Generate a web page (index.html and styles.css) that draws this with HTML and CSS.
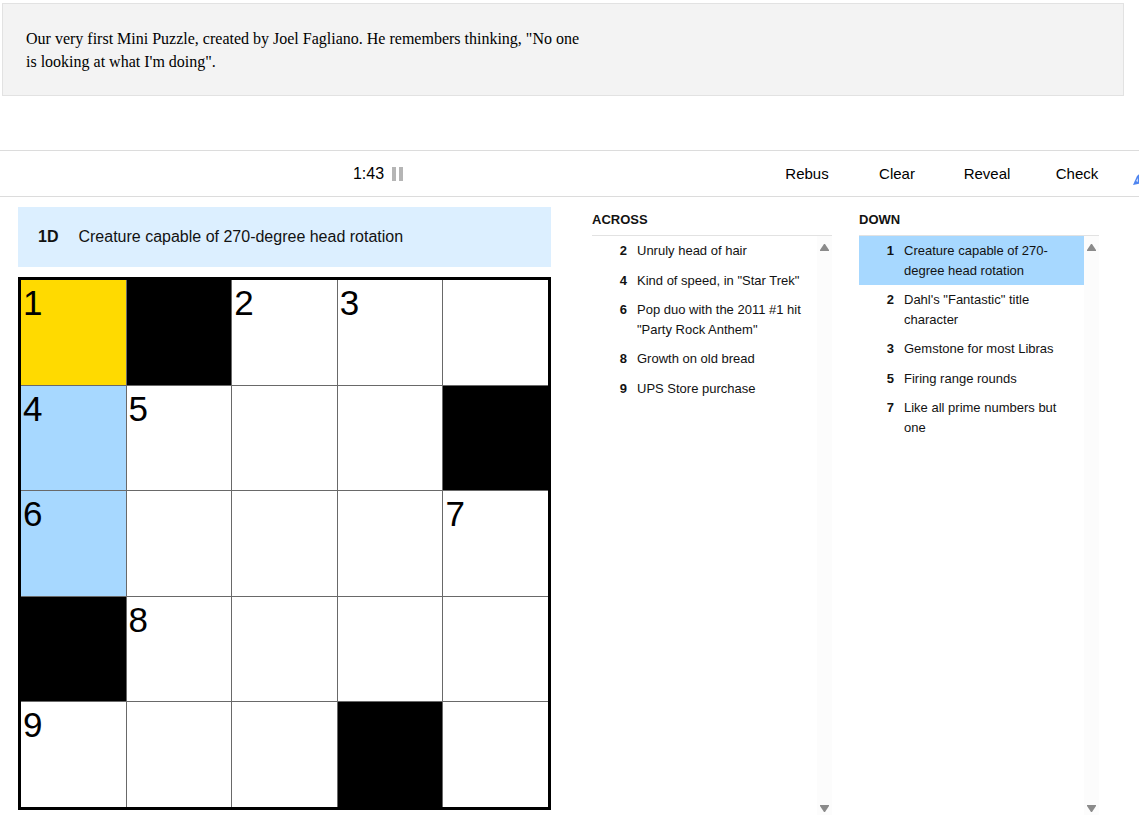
FILE: index.html
```html
<!DOCTYPE html>
<html lang="en">

<head>
  <meta charset="UTF-8">
  <title>Mini Crossword</title>
  <link rel="stylesheet" href="styles.css">
</head>

<body>
  <div class="note">
    <p>Our very first Mini Puzzle, created by Joel Fagliano. He remembers thinking, "No one is looking at what I'm doing".</p>
  </div>

  <div class="toolbar">
    <div class="timer">
      <span>1:43</span>
      <button class="pause" aria-label="Pause">
        <svg width="12" height="14" viewBox="0 0 12 14"><path d="M0 0h4v14H0zM7 0h4v14H7z" fill="#b5b5b5"/></svg>
      </button>
    </div>
    <div class="tools">
      <button>Rebus</button>
      <button>Clear</button>
      <button>Reveal</button>
      <button>Check</button>
    </div>
    <button class="pencil" aria-label="Pencil">
      <svg width="24" height="24" viewBox="0 0 24 24"><path d="M0 14L4 5L14 -4L19 2L9 12Z" fill="#4f85f0"/><path d="M3 10L5 7L5 11Z" fill="#c9dafa"/></svg>
    </button>
  </div>

  <main class="game">
    <section class="puzzle">
      <div class="current-clue">
        <span class="current-num">1D</span>
        <span>Creature capable of 270-degree head rotation</span>
      </div>
      <div class="board">
        <label class="cell selected"><span>1</span><input maxlength="1"></label>
        <div class="cell block"></div>
        <label class="cell"><span>2</span><input maxlength="1"></label>
        <label class="cell"><span>3</span><input maxlength="1"></label>
        <label class="cell"><input maxlength="1" aria-label="Row 1, column 5"></label>

        <label class="cell highlighted"><span>4</span><input maxlength="1"></label>
        <label class="cell"><span>5</span><input maxlength="1"></label>
        <label class="cell"><input maxlength="1" aria-label="Row 2, column 3"></label>
        <label class="cell"><input maxlength="1" aria-label="Row 2, column 4"></label>
        <div class="cell block"></div>

        <label class="cell highlighted"><span>6</span><input maxlength="1"></label>
        <label class="cell"><input maxlength="1" aria-label="Row 3, column 2"></label>
        <label class="cell"><input maxlength="1" aria-label="Row 3, column 3"></label>
        <label class="cell"><input maxlength="1" aria-label="Row 3, column 4"></label>
        <label class="cell"><span>7</span><input maxlength="1"></label>

        <div class="cell block"></div>
        <label class="cell"><span>8</span><input maxlength="1"></label>
        <label class="cell"><input maxlength="1" aria-label="Row 4, column 3"></label>
        <label class="cell"><input maxlength="1" aria-label="Row 4, column 4"></label>
        <label class="cell"><input maxlength="1" aria-label="Row 4, column 5"></label>

        <label class="cell"><span>9</span><input maxlength="1"></label>
        <label class="cell"><input maxlength="1" aria-label="Row 5, column 2"></label>
        <label class="cell"><input maxlength="1" aria-label="Row 5, column 3"></label>
        <div class="cell block"></div>
        <label class="cell"><input maxlength="1" aria-label="Row 5, column 5"></label>
      </div>
    </section>

    <div class="clues">
      <section class="clue-list">
        <h3>Across</h3>
        <div class="scroll-area">
          <ol>
            <li><b>2</b><span>Unruly head of hair</span></li>
            <li><b>4</b><span>Kind of speed, in "Star Trek"</span></li>
            <li><b>6</b><span>Pop duo with the 2011 #1 hit "Party Rock Anthem"</span></li>
            <li><b>8</b><span>Growth on old bread</span></li>
            <li><b>9</b><span>UPS Store purchase</span></li>
          </ol>
          <div class="rail">
            <button aria-label="Scroll up"><svg width="9" height="7" viewBox="0 0 9 7"><path d="M4 0h1l4 6v1H0V6z" fill="#8b8b8b"/></svg></button>
            <button aria-label="Scroll down"><svg width="9" height="7" viewBox="0 0 9 7"><path d="M4 7h1l4-6V0H0v1z" fill="#8b8b8b"/></svg></button>
          </div>
        </div>
      </section>

      <section class="clue-list">
        <h3>Down</h3>
        <div class="scroll-area">
          <ol>
            <li class="active"><b>1</b><span>Creature capable of 270-degree head rotation</span></li>
            <li><b>2</b><span>Dahl's "Fantastic" title character</span></li>
            <li><b>3</b><span>Gemstone for most Libras</span></li>
            <li><b>5</b><span>Firing range rounds</span></li>
            <li><b>7</b><span>Like all prime numbers but one</span></li>
          </ol>
          <div class="rail">
            <button aria-label="Scroll up"><svg width="9" height="7" viewBox="0 0 9 7"><path d="M4 0h1l4 6v1H0V6z" fill="#8b8b8b"/></svg></button>
            <button aria-label="Scroll down"><svg width="9" height="7" viewBox="0 0 9 7"><path d="M4 7h1l4-6V0H0v1z" fill="#8b8b8b"/></svg></button>
          </div>
        </div>
      </section>
    </div>
  </main>
</body>

</html>
```
FILE: styles.css
```css
* {
  box-sizing: border-box;
}

body {
  margin: 0;
  padding-top: 3px;
  background: #fff;
  color: #121212;
  font-family: "Liberation Sans", Arial, sans-serif;
}

button {
  padding: 0;
  border: 0;
  background: none;
  color: #000;
  font: inherit;
  cursor: pointer;
}

svg {
  display: block;
}

.note {
  margin: 0 15px 54px 2px;
  padding: 23px 23px 22px;
  border: 1px solid #e2e2e2;
  background: #f3f3f3;
  color: #000;
  font-family: "Liberation Serif", "Times New Roman", serif;
  font-size: 16px;
  line-height: 23px;
}

.note p {
  max-width: 560px;
  margin: 0;
}

.toolbar {
  display: flex;
  align-items: center;
  height: 47px;
  border-top: 1px solid #dcdcdc;
  border-bottom: 1px solid #dcdcdc;
  color: #000;
  font-size: 15px;
  overflow: hidden;
}

.timer {
  display: flex;
  flex: 1;
  justify-content: center;
  align-items: center;
  gap: 8px;
  padding-right: 5px;
  font-size: 16px;
}

.tools {
  display: flex;
}

.tools button {
  width: 90px;
  height: 45px;
}

.pencil {
  width: 17px;
  padding: 18px 0 0 11px;
}

.game {
  display: flex;
  gap: 41px;
  padding: 10px 40px 0 18px;
}

.puzzle {
  flex: 533;
  min-width: 0;
  padding-bottom: 5px;
}

.current-clue {
  display: flex;
  align-items: center;
  gap: 20px;
  height: 60px;
  margin-bottom: 10px;
  padding: 0 20px;
  background: #dcefff;
  font-size: 16px;
}

.current-num {
  font-weight: bold;
}

.board {
  display: grid;
  grid-template-columns: repeat(5, 1fr);
  gap: 1px;
  border: 3px solid #000;
  background: #696969;
}

.cell {
  display: flex;
  flex-direction: column;
  min-width: 0;
  aspect-ratio: 1;
  padding: 3px 2px 0;
  background: #fff;
  color: #000;
  font-size: 35px;
  line-height: 40px;
}

.cell input {
  flex: 1;
  width: 100%;
  min-height: 0;
  border: 0;
  outline: 0;
  background: transparent;
  font: inherit;
  text-align: center;
  text-transform: uppercase;
}

.selected {
  background: #ffda00;
}

.highlighted {
  background: #a7d8ff;
}

.block {
  background: #000;
}

.clues {
  display: flex;
  flex: 507;
  gap: 27px;
  min-width: 0;
}

.clue-list {
  display: flex;
  flex: 1;
  flex-direction: column;
}

h3 {
  margin: 0;
  padding: 3px 0 5px;
  border-bottom: 1px solid #e2e2e2;
  font-size: 13px;
  line-height: 20px;
  text-transform: uppercase;
}

.scroll-area {
  display: flex;
  flex: 1;
}

ol {
  flex: 1;
  margin: 0;
  padding: 0;
  list-style: none;
}

li {
  display: flex;
  gap: 10px;
  padding: 5px 10px 5px 0;
  font-size: 13px;
  line-height: 1.5;
}

li b {
  flex: 0 0 35px;
  text-align: right;
}

.active {
  background: #a7d8ff;
}

.rail {
  display: flex;
  flex-direction: column;
  justify-content: space-between;
  width: 15px;
  padding: 8px 3px 3px;
  background: #fcfcfc;
}
```
